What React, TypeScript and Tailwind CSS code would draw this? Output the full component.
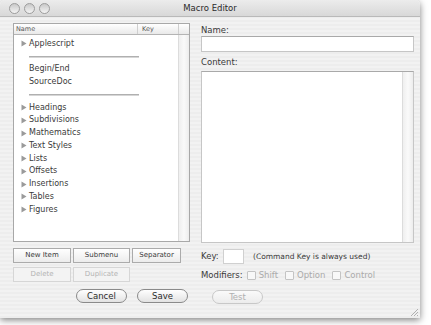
import React from "react";

const F = { fontFamily: '"DejaVu Sans", "Lucida Grande", sans-serif' };

function Tri() {
  return (
    <svg width="6" height="7" viewBox="0 0 6 7" className="shrink-0">
      <path d="M0.5 0.5 L5.5 3.5 L0.5 6.5 Z" fill="#9a9a9a" />
    </svg>
  );
}

function Row({ label, tri }: { label: string; tri?: boolean }) {
  return (
    <div className="h-[12.75px] flex items-center pl-[7px] text-[8px] leading-none text-[#3a3a3a]">
      <div className="w-[8px] flex items-center">{tri ? <Tri /> : null}</div>
      <span>{label}</span>
    </div>
  );
}

function Sep() {
  return (
    <div className="h-[12.75px] flex items-center pl-[15px]">
      <div className="w-[110px] h-[2px] bg-[#b0b0b0] border-b border-[#d6d6d6]" />
    </div>
  );
}

function Bevel({ label, disabled, w }: { label: string; disabled?: boolean; w: string }) {
  return (
    <div
      className={`${w} h-[15px] flex items-center justify-center text-[7px] leading-none border ${
        disabled
          ? "border-[#d6d6d6] text-[#b4b4b4] bg-[#f3f3f3]"
          : "border-[#ababab] text-[#3a3a3a] bg-gradient-to-b from-[#ffffff] to-[#ececec]"
      }`}
    >
      {label}
    </div>
  );
}

function Pill({ label, disabled, w }: { label: string; disabled?: boolean; w: string }) {
  return (
    <div
      className={`${w} h-[14px] rounded-full flex items-center justify-center text-[8.5px] leading-none border ${
        disabled
          ? "border-[#c8c8c8] text-[#b0b0b0] bg-gradient-to-b from-[#fafafa] to-[#ececec]"
          : "border-[#8a8a8a] text-[#2a2a2a] bg-gradient-to-b from-[#ffffff] to-[#e2e2e2]"
      }`}
    >
      {label}
    </div>
  );
}

function Check({ label }: { label: string }) {
  return (
    <div className="flex items-center gap-[3px]">
      <div className="w-[9px] h-[9px] border border-[#c4c4c4] bg-[#f8f8f8] rounded-[1px]" />
      <span className="text-[8.5px] leading-none text-[#ababab]">{label}</span>
    </div>
  );
}

function Light() {
  return (
    <div className="w-[11px] h-[11px] rounded-full border border-[#9c9c9c] bg-gradient-to-b from-[#c9c9c9] to-[#f4f4f4]" />
  );
}

export default function App() {
  return (
    <div className="w-[431px] h-[325px] bg-white relative overflow-hidden" style={F}>
      <div className="w-[420px] h-[318px] flex flex-col rounded-t-[5px] overflow-hidden shadow-[0_2px_7px_rgba(0,0,0,0.5)] bg-[repeating-linear-gradient(0deg,#ededed_0px,#ededed_2px,#f2f2f2_2px,#f2f2f2_4px)] relative">
        {/* title bar */}
        <div className="h-[17px] flex items-center bg-gradient-to-b from-[#ececec] to-[#d8d8d8] border-b border-[#b9b9b9]">
          <div className="w-[56px] flex items-center gap-[4px] pl-[9px]">
            <Light />
            <Light />
            <Light />
          </div>
          <div className="flex-1 text-center text-[8.5px] leading-none text-[#2a2a2a] pt-[1px]">Macro Editor</div>
          <div className="w-[56px]" />
        </div>

        <div className="flex pl-[13px] pt-[6px] gap-[11px]">
          {/* left column */}
          <div className="w-[177px] flex flex-col">
            <div className="h-[219px] border border-[#a8a8a8] bg-white flex flex-col">
              <div className="h-[11px] flex items-stretch bg-gradient-to-b from-[#ffffff] to-[#e9e9e9] border-b border-[#b4b4b4] text-[6.5px] leading-none text-[#555]">
                <div className="w-[124px] flex items-center pl-[2px] border-r border-[#cfcfcf]">Name</div>
                <div className="w-[41px] flex items-center pl-[4px] border-r border-[#cfcfcf]">Key</div>
                <div className="flex-1" />
              </div>
              <div className="flex-1 flex">
                <div className="flex-1 pt-[2.5px]">
                  <Row label="Applescript" tri />
                  <Sep />
                  <Row label="Begin/End" />
                  <Row label="SourceDoc" />
                  <Sep />
                  <Row label="Headings" tri />
                  <Row label="Subdivisions" tri />
                  <Row label="Mathematics" tri />
                  <Row label="Text Styles" tri />
                  <Row label="Lists" tri />
                  <Row label="Offsets" tri />
                  <Row label="Insertions" tri />
                  <Row label="Tables" tri />
                  <Row label="Figures" tri />
                </div>
                <div className="w-[11px] border-l border-[#dcdcdc] bg-gradient-to-r from-[#efefef] via-[#fafafa] to-[#ededed]" />
              </div>
            </div>
            <div className="mt-[6px] flex gap-[2px]">
              <Bevel label="New Item" w="w-[58px]" />
              <Bevel label="Submenu" w="w-[57px]" />
              <Bevel label="Separator" w="w-[49px]" />
            </div>
            <div className="mt-[4px] flex gap-[2px]">
              <Bevel label="Delete" w="w-[58px]" disabled />
              <Bevel label="Duplicate" w="w-[57px]" disabled />
            </div>
            <div className="mt-[7px] flex gap-[10px] pl-[63px]">
              <Pill label="Cancel" w="w-[51px]" />
              <Pill label="Save" w="w-[51px]" />
            </div>
          </div>

          {/* right column */}
          <div className="w-[213px] flex flex-col pt-[1px]">
            <div className="h-[11px] flex items-center text-[8.5px] leading-none text-[#3a3a3a] pt-[1px]">Name:</div>
            <div className="mt-[1px] h-[16px] bg-white border border-[#c6c6c6] border-t-[#a9a9a9]" />
            <div className="mt-[5px] h-[11px] flex items-center text-[8.5px] leading-none text-[#3a3a3a]">Content:</div>
            <div className="mt-[3px] h-[172px] bg-white border border-[#c6c6c6] border-t-[#a9a9a9] flex">
              <div className="flex-1" />
              <div className="w-[11px] border-l border-[#dcdcdc] bg-gradient-to-r from-[#efefef] via-[#fafafa] to-[#ededed]" />
            </div>
            <div className="mt-[6px] h-[15px] flex items-center">
              <span className="text-[8.5px] leading-none text-[#3a3a3a] w-[22px]">Key:</span>
              <div className="w-[21px] h-[15px] bg-white border border-[#d0d0d0]" />
              <span className="ml-[9px] text-[7.5px] leading-none text-[#3a3a3a]">(Command Key is always used)</span>
            </div>
            <div className="mt-[6px] h-[11px] flex items-center">
              <span className="text-[8.5px] leading-none text-[#3a3a3a] mr-[4px]">Modifiers:</span>
              <div className="flex items-center gap-[7px]">
                <Check label="Shift" />
                <Check label="Option" />
                <Check label="Control" />
              </div>
            </div>
            <div className="mt-[9px] pl-[11px]">
              <Pill label="Test" w="w-[51px]" disabled />
            </div>
          </div>
        </div>

        <svg width="8" height="8" viewBox="0 0 8 8" className="absolute right-[2px] bottom-[2px]">
          <path d="M1 8 L8 1 M4 8 L8 4 M7 8 L8 7" stroke="#a0a0a0" strokeWidth="0.8" />
        </svg>
      </div>
    </div>
  );
}
